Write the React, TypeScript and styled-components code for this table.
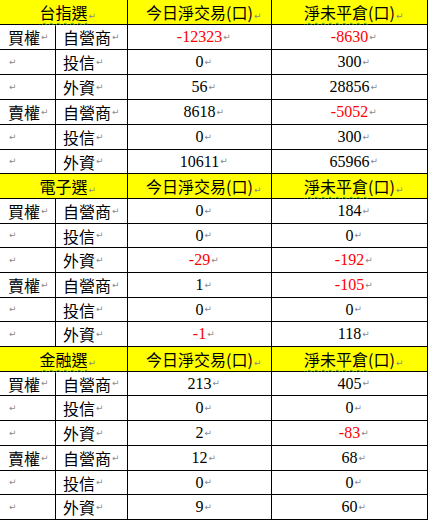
import React from "react";
import styled, { createGlobalStyle } from "styled-components";

const Global = createGlobalStyle`
  html, body { margin: 0; padding: 0; background: #ffffff; }
  body { overflow: hidden; }
`;

const Page = styled.div`
  margin: -1px 0 0 -1px;
  width: 429px;
`;

const Sheet = styled.div`
  display: flex;
  flex-direction: column;
  gap: 1px;
  padding: 1px;
  background: #000000;
`;

const Row = styled.div<{ $h: number }>`
  display: grid;
  grid-template-columns: 55px 71px 143px 155px;
  gap: 1px;
  height: ${(p) => p.$h}px;
`;

const HeadRow = styled.div<{ $h: number }>`
  display: grid;
  grid-template-columns: 127px 143px 155px;
  gap: 1px;
  height: ${(p) => p.$h}px;
  line-height: ${(p) => p.$h}px;
`;

const HeadCell = styled.div`
  background: #ffff00;
  text-align: center;
  font-family: "Noto Sans CJK TC", "Noto Sans CJK SC", sans-serif;
  font-size: 16px;
  color: #000000;
  white-space: nowrap;
  overflow: visible;
`;

const Cell = styled.div<{ $pad?: number }>`
  background: #ffffff;
  display: flex;
  align-items: center;
  justify-content: ${(p) => (p.$pad !== undefined ? "flex-start" : "center")};
  padding-left: ${(p) => p.$pad ?? 0}px;
  font-family: "Noto Sans CJK TC", "Noto Sans CJK SC", sans-serif;
  font-size: 16px;
  line-height: 1;
  color: #000000;
  white-space: nowrap;
  min-width: 0;
`;

const Num = styled.span<{ $neg?: boolean }>`
  font-family: "Liberation Serif", "Times New Roman", serif;
  font-size: 16px;
  color: ${(p) => (p.$neg ? "#ff0000" : "#000000")};
`;

const Label = styled.span`
  font-family: "Noto Sans CJK TC", sans-serif;
  font-size: 16px;
`;

const Squiggle = styled.span`
  text-decoration: underline wavy #3fae2a;
  text-decoration-thickness: 1px;
  text-underline-offset: 3px;
  text-decoration-skip-ink: none;
`;

const Mark = styled.span`
  display: inline-block;
  width: 0;
  overflow: visible;
  white-space: nowrap;
  font-family: "DejaVu Sans", sans-serif;
  font-size: 9px;
  line-height: 1;
  color: #8a8a8a;
  text-indent: 1px;
`;

const FlowMark = styled.span`
  font-family: "DejaVu Sans", sans-serif;
  font-size: 9px;
  color: #8a8a8a;
  margin-left: 1px;
`;

const RET = "\u21B5";

type Line = { side: string; who: string; a: number; b: number };
type Section = { title: string; squiggleTitle: boolean; rows: Line[] };

const sections: Section[] = [
  {
    title: "台指選",
    squiggleTitle: true,
    rows: [
      { side: "買權", who: "自營商", a: -12323, b: -8630 },
      { side: "", who: "投信", a: 0, b: 300 },
      { side: "", who: "外資", a: 56, b: 28856 },
      { side: "賣權", who: "自營商", a: 8618, b: -5052 },
      { side: "", who: "投信", a: 0, b: 300 },
      { side: "", who: "外資", a: 10611, b: 65966 },
    ],
  },
  {
    title: "電子選",
    squiggleTitle: false,
    rows: [
      { side: "買權", who: "自營商", a: 0, b: 184 },
      { side: "", who: "投信", a: 0, b: 0 },
      { side: "", who: "外資", a: -29, b: -192 },
      { side: "賣權", who: "自營商", a: 1, b: -105 },
      { side: "", who: "投信", a: 0, b: 0 },
      { side: "", who: "外資", a: -1, b: 118 },
    ],
  },
  {
    title: "金融選",
    squiggleTitle: true,
    rows: [
      { side: "買權", who: "自營商", a: 213, b: 405 },
      { side: "", who: "投信", a: 0, b: 0 },
      { side: "", who: "外資", a: 2, b: -83 },
      { side: "賣權", who: "自營商", a: 12, b: 68 },
      { side: "", who: "投信", a: 0, b: 0 },
      { side: "", who: "外資", a: 9, b: 60 },
    ],
  },
];

const heights = [24, 24, 24, 24, 24, 24, 23, 24, 24, 23, 24, 24, 23, 24, 24, 23, 24, 24, 24, 23, 24];

function NumCell({ v }: { v: number }) {
  return (
    <Cell>
      <Num $neg={v < 0}>{String(v)}</Num>
      <Mark>{RET}</Mark>
    </Cell>
  );
}

export default function App() {
  let idx = 0;
  const next = () => heights[idx++];
  return (
    <>
      <Global />
      <Page>
        <Sheet>
          {sections.map((s) => (
            <React.Fragment key={s.title}>
              <HeadRow $h={next()}>
                <HeadCell>
                  {s.squiggleTitle ? <Squiggle>{s.title}</Squiggle> : s.title}
                  <Mark>{RET}</Mark>
                </HeadCell>
                <HeadCell>
                  今日淨交易(口)
                  <Mark>{RET}</Mark>
                </HeadCell>
                <HeadCell>
                  <Squiggle>淨未平倉</Squiggle>(口)
                  <Mark>{RET}</Mark>
                </HeadCell>
              </HeadRow>
              {s.rows.map((r, i) => (
                <Row $h={next()} key={i}>
                  <Cell $pad={8}>
                    {r.side ? <Label>{r.side}</Label> : null}
                    <FlowMark>{RET}</FlowMark>
                  </Cell>
                  <Cell $pad={7}>
                    <Label>{r.who}</Label>
                    <FlowMark>{RET}</FlowMark>
                  </Cell>
                  <NumCell v={r.a} />
                  <NumCell v={r.b} />
                </Row>
              ))}
            </React.Fragment>
          ))}
        </Sheet>
      </Page>
    </>
  );
}
